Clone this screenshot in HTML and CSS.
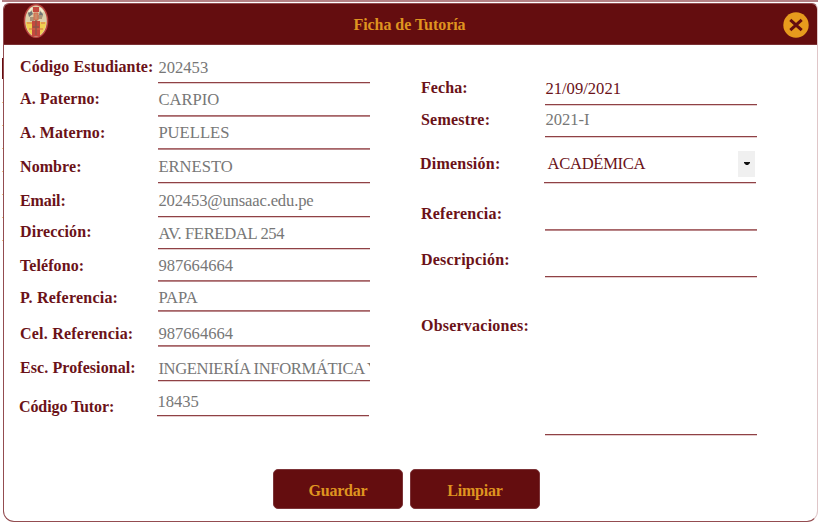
FILE: index.html
```html
<!DOCTYPE html>
<html lang="es">
<head>
<meta charset="utf-8">
<title>Ficha de Tutoría</title>
<link rel="stylesheet" href="styles.css">
</head>
<body>
<div class="backdrop"></div>
<main class="dialog">
  <header class="titlebar">
    <svg class="crest" viewBox="0 0 26 36">
      <ellipse cx="13" cy="18" rx="12.3" ry="17" fill="#b94440"/>
      <ellipse cx="13" cy="18" rx="10.8" ry="15.4" fill="#ddd0aa"/>
      <path d="M3 19h20c0 6-3 11-6 13H9c-3-2-6-7-6-13z" fill="#f0cf50"/>
      <path d="M10 4h6v5h-6zM9 18h8v15H9z" fill="#c4483e"/>
      <path d="M5 10l3-3 2 4-4 3zM17 8l3 3-1 4-3-3z" fill="#727777"/>
      <path d="M7 14h4v4H7zM14 12h5v4h-5z" fill="#a99378"/>
      <path d="M11 10h4v7h-4zM4 20h5M18 20h4M6 26h14" fill="#c98b68" stroke="#d76b4b"/>
      <path d="M13 17v15M10 24h6" stroke="#8b5548" stroke-width="1.3"/>
      <path d="M9 5l-3 4M17 5l3 4" stroke="#f4edcf" stroke-width="2"/>
    </svg>
    <h1>Ficha de Tutoría</h1>
    <svg class="close" viewBox="0 0 26 26">
      <circle cx="13" cy="13" r="12.7" fill="#e79b1d"/>
      <path d="M7.3 7.8l11.4 10.4M18.7 7.8L7.3 18.2" stroke="#640d0f" stroke-width="3"/>
    </svg>
  </header>
  <div class="form">
    <section class="student">
      <div class="row"><label>Código Estudiante:</label><span class="value">202453</span></div>
      <div class="row soft"><label>A. Paterno:</label><span class="value">CARPIO</span></div>
      <div class="row soft"><label>A. Materno:</label><span class="value">PUELLES</span></div>
      <div class="row"><label>Nombre:</label><span class="value">ERNESTO</span></div>
      <div class="row"><label class="tight">Email:</label><span class="value email">202453@unsaac.edu.pe</span></div>
      <div class="row"><label>Dirección:</label><span class="value address">AV. FEREDAL 254</span></div>
      <div class="row soft"><label>Teléfono:</label><span class="value">987664664</span></div>
      <div class="row soft"><label class="loose">P. Referencia:</label><span class="value">PAPA</span></div>
      <div class="row soft"><label class="loose">Cel. Referencia:</label><span class="value">987664664</span></div>
      <div class="row"><label>Esc. Profesional:</label><span class="value school">INGENIERÍA INFORMÁTICA Y</span></div>
      <div class="row tutor"><label class="tight">Código Tutor:</label><span class="value">18435</span></div>
    </section>
    <section class="session">
      <div class="row"><label>Fecha:</label><span class="value active">21/09/2021</span></div>
      <div class="row"><label class="loose">Semestre:</label><span class="value">2021-I</span></div>
      <div class="row dimension"><label class="loose">Dimensión:</label><span class="value active select"><span>ACADÉMICA</span><span class="arrow"><svg viewBox="0 0 6 4"><path d="M0 0h6v1L4 3H2L0 1z"/></svg></span></span></div>
      <div class="row soft"><label class="loose">Referencia:</label><span class="value"></span></div>
      <div class="row"><label class="loose">Descripción:</label><span class="value"></span></div>
      <div class="row"><label class="loose">Observaciones:</label><span class="value"></span></div>
    </section>
  </div>
  <footer class="actions">
    <button>Guardar</button>
    <button>Limpiar</button>
  </footer>
</main>
</body>
</html>
```
FILE: styles.css
```css
* { box-sizing: border-box; }
body {
  margin: 0;
  width: 821px;
  height: 526px;
  overflow: hidden;
  padding: 3px;
  background: #fff;
  font-family: "Liberation Serif", serif;
}
/* Slivers of the table behind the dialog */
.backdrop {
  position: absolute;
  z-index: -1;
  left: 2px;
  top: 0;
  width: 816px;
  height: 242px;
  background:
    linear-gradient(#b38084, #b38084) 0 0 / 100% 2px no-repeat,
    linear-gradient(#640d0f, #640d0f) 0 58px / 100% 21px no-repeat,
    repeating-linear-gradient(transparent 0 22px, #edc284 22px 23px) 0 80px / 100% 161px no-repeat;
}
.dialog {
  width: 815px;
  height: 519px;
  display: flex;
  flex-direction: column;
  overflow: hidden;
  background: #fff;
  border: 1px solid #934c50;
  border-right-color: #dfc6c8;
  border-radius: 6px 6px 11px 11px;
}
.titlebar {
  flex: none;
  height: 42px;
  margin: -1px -1px 0;
  padding: 0 9px 0 20px;
  display: flex;
  align-items: center;
  justify-content: space-between;
  background: #640d0f;
  border-bottom: 1px solid #7b3033;
}
.crest { width: 26px; height: 36px; margin-bottom: 5px; }
.close { width: 26px; height: 26px; margin-top: 2px; }
h1 {
  margin: 2px 13px 0 0;
  font-size: 16px;
  line-height: 20px;
  letter-spacing: -.05px;
  color: #df9420;
}
.form { display: flex; height: 390px; padding-left: 16px; }
.student { width: 401px; }
.row { display: flex; align-items: flex-end; }
label {
  width: 138px;
  padding-bottom: var(--lp);
  font-size: 16px;
  font-weight: bold;
  line-height: 20px;
  letter-spacing: .08px;
  color: #6b1218;
  white-space: nowrap;
}
.loose { letter-spacing: .22px; }
.tight { letter-spacing: -.1px; }
.value {
  width: 212px;
  min-height: 20px;
  padding: 0 0 var(--vp) .4px;
  overflow: hidden;
  border-bottom: 1px solid #8f4145;
  box-shadow: 0 1px #e3cccd;
  color: #777;
  font-size: 16.6px;
  line-height: 20px;
  white-space: nowrap;
}
.soft .value { border-color: #a76568; box-shadow: 0 1px #b98689; }
.value.active { color: #6b1218; }
.session label { width: 124px; }
.email { letter-spacing: -.15px; }
.address { letter-spacing: -.35px; }
.school { letter-spacing: -.36px; }
.tutor { margin-left: -1px; }

.student .row:nth-child(1) { height: 38px; --lp: 6px; --vp: 4px; }
.student .row:nth-child(2) { height: 33px; --lp: 7px; --vp: 5px; }
.student .row:nth-child(3) { height: 33px; --lp: 6px; --vp: 5px; }
.student .row:nth-child(4) { height: 34px; --lp: 6px; --vp: 5px; }
.student .row:nth-child(5) { height: 34px; --lp: 6px; --vp: 5px; }
.student .row:nth-child(6) { height: 32px; --lp: 7px; --vp: 4px; }
.student .row:nth-child(7) { height: 32px; --lp: 5px; --vp: 4px; }
.student .row:nth-child(8) { height: 30px; --lp: 3px; --vp: 2px; }
.student .row:nth-child(9) { height: 35px; --lp: 2px; --vp: 1px; }
.student .row:nth-child(10) { height: 35px; --lp: 3px; --vp: 1px; }
.student .row:nth-child(11) { height: 35px; --vp: 3px; }
.tutor label { --lp: 0px; margin-bottom: -1px; }

.session .row:nth-child(1) { height: 60px; --lp: 7px; --vp: 5px; }
.session .row:nth-child(2) { height: 32px; --lp: 7px; --vp: 6px; }
.session .row:nth-child(3) { height: 46px; --lp: 9px; }
.session .row:nth-child(4) { height: 47px; --lp: 6px; --vp: 2px; }
.session .row:nth-child(5) { height: 47px; --lp: 7px; --vp: 2px; }
.session .row:nth-child(6) { height: 158px; --lp: 99px; --vp: 2px; }

.dimension { margin-left: -1px; }
.select {
  display: flex;
  align-items: center;
  justify-content: space-between;
  padding: 0 1px 5px 3.5px;
  letter-spacing: -.3px;
}
.arrow {
  width: 17px;
  height: 26px;
  display: grid;
  place-items: center;
  background: #f0f0f0;
}
.arrow svg { width: 6px; height: 4px; fill: #111; }
.actions { display: flex; gap: 7px; margin: 34px 0 0 269px; }
button {
  width: 130px;
  height: 40px;
  padding: 4px 0 0;
  border: 1px solid #7c3438;
  border-radius: 5px;
  background: #640d0f;
  color: #df9420;
  font: bold 16px/20px "Liberation Serif", serif;
  letter-spacing: -.2px;
}
```
